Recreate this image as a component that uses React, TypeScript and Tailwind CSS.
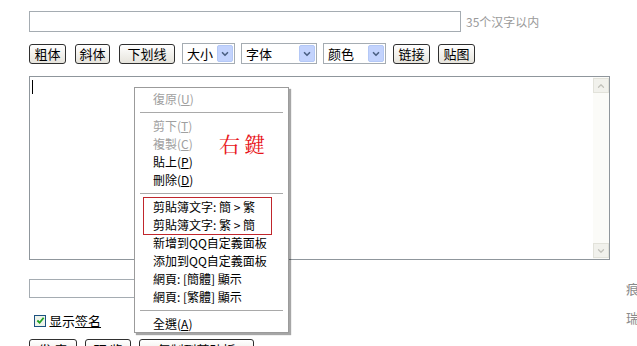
import { ChevronDown, ChevronUp } from 'lucide-react'

const font = "font-['Noto_Sans_CJK_SC','Noto_Sans_CJK_TC',sans-serif]"

const XpButton = ({ label, w }: { label: string; w: string }) => (
	<button
		className={`${w} h-[20px] flex items-center justify-center rounded-[3px] border border-[#2f2f2f] bg-gradient-to-b from-white to-[#e6e4dc] text-[13px] leading-none text-black`}
	>
		{label}
	</button>
)

const XpSelect = ({ label, w }: { label: string; w: string }) => (
	<div className={`${w} h-[21px] flex items-center justify-between border border-[#a5acb2] bg-white pl-[4px] pr-[1px]`}>
		<span className="text-[13px] leading-none">{label}</span>
		<span className="w-[16px] h-[17px] flex items-center justify-center rounded-[2px] bg-[#c3d3fd] border border-[#b4c8f6]">
			<ChevronDown className="w-[10px] h-[10px] text-[#4d6185]" strokeWidth={4} />
		</span>
	</div>
)

// Pieza del menú contextual
const MenuItem = ({ text, hot, disabled }: { text: string; hot?: string; disabled?: boolean }) => (
	<div className={`h-[18px] flex items-center pl-[18px] text-[12px] leading-none ${disabled ? 'text-[#a0a0a0]' : 'text-black'}`}>
		{text}
		{hot && (
			<span>
				(<span className="underline">{hot}</span>)
			</span>
		)}
	</div>
)

const Sep = () => <div className="mx-[5px] my-[4px] h-px bg-[#a9a9a9]" />

export default function App() {
	return (
		<div className={`relative w-[637px] h-[346px] overflow-hidden bg-white ${font}`}>
			<div className="flex flex-col pl-[29px] pt-[11px]">
				<div className="h-[21px] flex items-center">
					<div className="w-[432px] h-[21px] border border-[#a5acb2]" />
					<span className="ml-[5px] text-[12px] leading-none text-[#9a9a9a]">35个汉字以内</span>
				</div>

				<div className="mt-[11px] h-[21px] flex items-center">
					<XpButton label="粗体" w="w-[37px]" />
					<div className="w-[9px]" />
					<XpButton label="斜体" w="w-[35px]" />
					<div className="w-[9px]" />
					<XpButton label="下划线" w="w-[56px]" />
					<div className="w-[7px]" />
					<XpSelect label="大小" w="w-[53px]" />
					<div className="w-[6px]" />
					<XpSelect label="字体" w="w-[76px]" />
					<div className="w-[6px]" />
					<XpSelect label="颜色" w="w-[63px]" />
					<div className="w-[7px]" />
					<XpButton label="链接" w="w-[37px]" />
					<div className="w-[8px]" />
					<XpButton label="贴图" w="w-[37px]" />
				</div>

				<div className="mt-[12px] w-[581px] h-[184px] flex border border-[#8f969c]">
					<div className="flex-1 pl-[2px] pt-[3px]">
						<div className="w-px h-[14px] bg-black" />
					</div>
					<div className="w-[16px] flex flex-col justify-between bg-[#fbfbf8] py-[1px]">
						<div className="h-[15px] flex items-center justify-center border border-[#e2e2da] bg-[#f1f1ec]">
							<ChevronUp className="w-[10px] h-[10px] text-[#c2c2bb]" strokeWidth={3} />
						</div>
						<div className="h-[15px] flex items-center justify-center border border-[#e2e2da] bg-[#f1f1ec]">
							<ChevronDown className="w-[10px] h-[10px] text-[#c2c2bb]" strokeWidth={3} />
						</div>
					</div>
				</div>

				<div className="mt-[19px] w-[260px] h-[19px] border border-[#a5acb2]" />

				<div className="mt-[16px] ml-[5px] h-[13px] flex items-center text-[13px] leading-none">
					<span className="w-[12px] h-[12px] flex items-center justify-center border border-[#1c5180] bg-[#eef3ea]">
						<svg viewBox="0 0 10 10" className="w-[9px] h-[9px]">
							<path d="M1.5 5 L4 7.5 L8.5 2" fill="none" stroke="#21a121" strokeWidth="2" />
						</svg>
					</span>
					<span className="ml-[3px]">显示</span>
					<span className="underline">签名</span>
				</div>

				<div className="mt-[12px] flex items-start">
					<XpButton label="发 表" w="w-[48px]" />
					<div className="w-[8px]" />
					<XpButton label="预 览" w="w-[46px]" />
					<div className="w-[8px]" />
					<XpButton label="复制到剪贴板" w="w-[115px]" />
				</div>
			</div>

			<div className="absolute left-[626px] top-[282px] text-[13px] text-[#8a8a8a] leading-none">痕</div>
			<div className="absolute left-[626px] top-[311px] text-[13px] text-[#8a8a8a] leading-none">瑞</div>

			{/* Menú contextual */}
			<div className="absolute left-[134px] top-[87px] w-[155px] h-[246px] border border-[#9b9b9b] bg-white pt-[2px] shadow-[2px_2px_1px_rgba(0,0,0,0.35)] font-['Noto_Sans_CJK_TC',sans-serif]">
				<MenuItem text="復原" hot="U" disabled />
				<Sep />
				<MenuItem text="剪下" hot="T" disabled />
				<MenuItem text="複製" hot="C" disabled />
				<MenuItem text="貼上" hot="P" />
				<MenuItem text="刪除" hot="D" />
				<Sep />
				<MenuItem text="剪貼簿文字: 簡 > 繁" />
				<MenuItem text="剪貼簿文字: 繁 > 簡" />
				<MenuItem text="新增到QQ自定義面板" />
				<MenuItem text="添加到QQ自定義面板" />
				<MenuItem text="網頁: [簡體] 顯示" />
				<MenuItem text="網頁: [繁體] 顯示" />
				<Sep />
				<MenuItem text="全選" hot="A" />

				<div className="absolute left-[8px] top-[109px] w-[129px] h-[38px] border border-[#c0262c]" />

				<div className="absolute left-[84px] top-[45px] text-[21px] leading-none text-[#e8141b] tracking-[4px] font-['Noto_Serif_CJK_TC','Liberation_Serif',serif]">
					右鍵
				</div>
			</div>
		</div>
	)
}
